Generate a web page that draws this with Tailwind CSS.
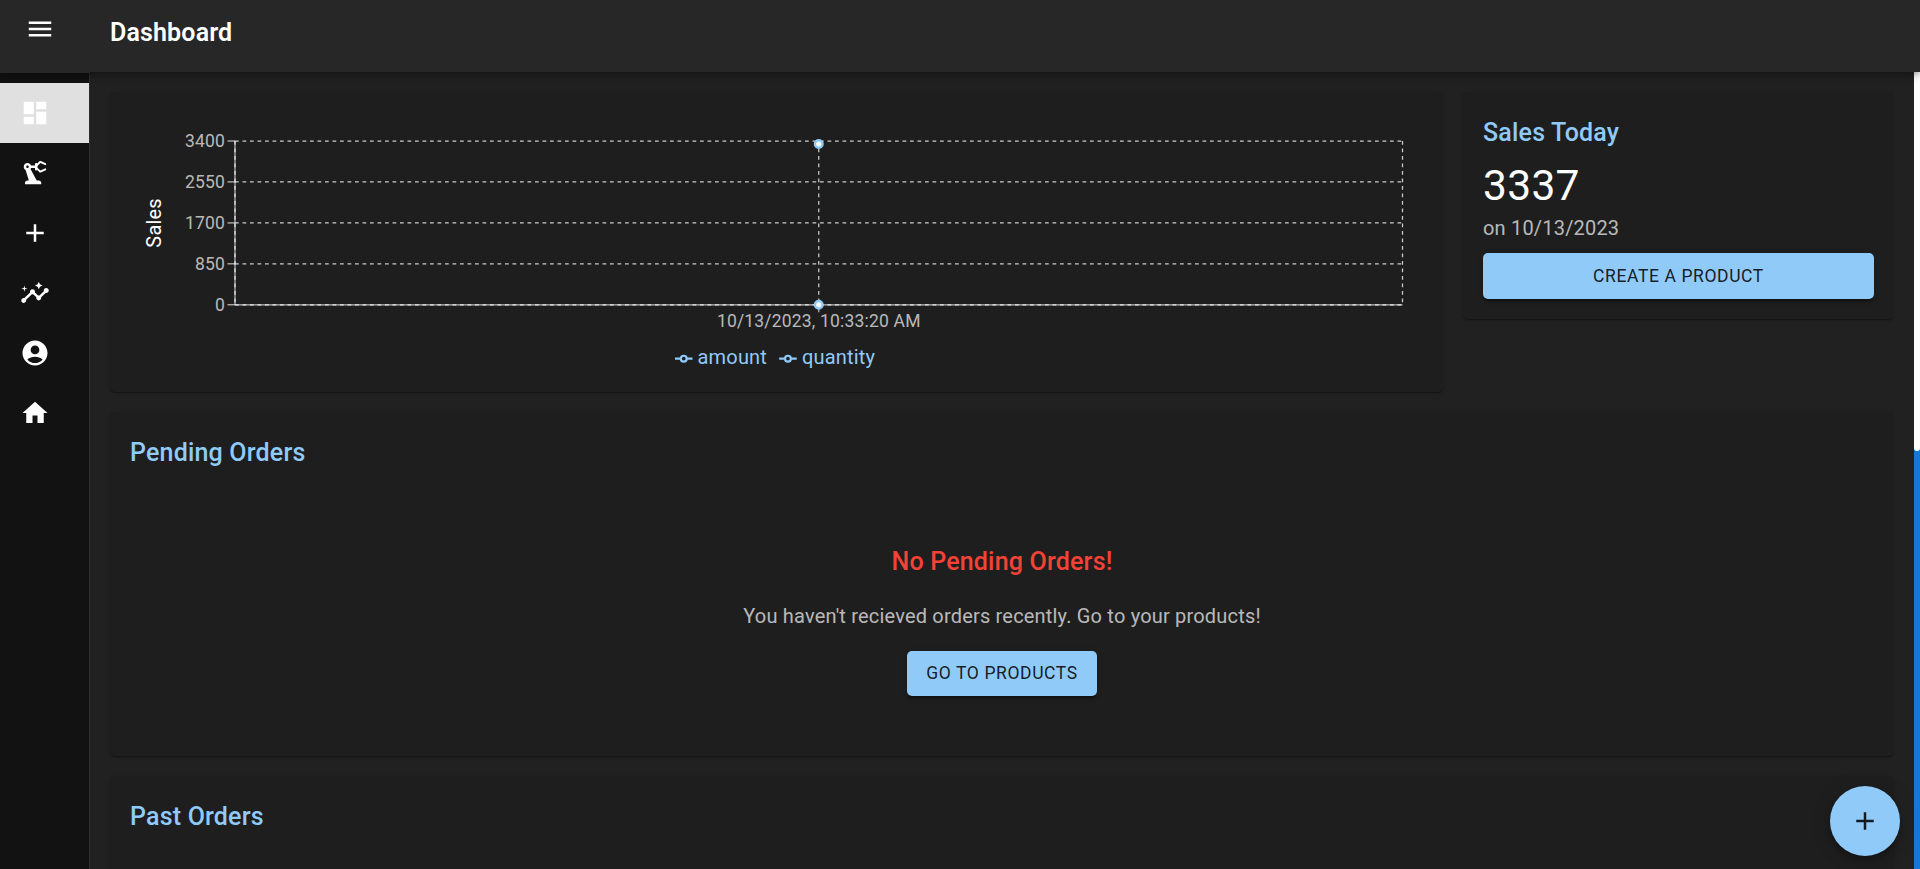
<!DOCTYPE html>
<html lang="en">
<head>
<meta charset="utf-8">
<title>Dashboard</title>
<script src="https://cdn.jsdelivr.net/npm/@tailwindcss/browser@4"></script>
</head>
<body class="h-screen overflow-hidden bg-[#212121] font-['Roboto',sans-serif] text-[20px] leading-[30px] tracking-[0.1876px] text-white">
<div class="flex h-full flex-col">
  <header class="relative z-10 flex h-[72px] shrink-0 items-center bg-[#272727] shadow-[0_2.5px_5px_-1px_rgba(0,0,0,0.2),0_5px_6px_rgba(0,0,0,0.14),0_1px_12px_rgba(0,0,0,0.12)]">
    <button class="mb-[14px] ml-[25px] size-[30px]" aria-label="Menu">
      <svg class="size-[30px]" viewBox="0 0 24 24" fill="currentColor"><path d="M3 18h18v-2H3v2zm0-5h18v-2H3v2zm0-7v2h18V6H3z"/></svg>
    </button>
    <h1 class="mb-[6px] ml-[55px] text-[25px] leading-[40px] font-semibold tracking-[0.15px]">Dashboard</h1>
  </header>

  <div class="flex min-h-0 flex-1">
    <nav class="flex w-[90px] shrink-0 flex-col border-r border-[#2e2e2e] bg-[#121212]">
      <div class="relative z-20 mb-[10px] h-px w-[90px] shrink-0 bg-[#272727]"></div>
      <a class="flex h-[60px] items-center bg-[#e0e0e0] pl-5"><svg class="size-[30px]" viewBox="0 0 24 24" fill="currentColor"><path d="M3 13h8V3H3v10zm0 8h8v-6H3v6zm10 0h8V11h-8v10zm0-18v6h8V3h-8z"/></svg></a>
      <a class="flex h-[60px] items-center pl-5"><svg class="size-[30px]" viewBox="0 0 24 24" fill="currentColor"><path d="m19.93 8.35-3.6 1.68L14 7.7V6.3l2.33-2.33 3.6 1.68c.38.18.82.01 1-.36.18-.38.01-.82-.36-1l-3.92-1.83c-.38-.18-.83-.1-1.13.2L13.78 4.3c-.18-.19-.45-.3-.78-.3-.55 0-1 .45-1 1v1H8.82C8.4 4.84 7.3 4 6 4 4.34 4 3 5.34 3 7c0 1.1.6 2.05 1.48 2.58L7.08 18H6c-1.1 0-2 .9-2 2v1h13v-1c0-1.1-.9-2-2-2h-1.62L8.41 8.77c.17-.24.31-.49.41-.77H12v1c0 .55.45 1 1 1 .32 0 .6-.16.78-.4l1.74 1.74c.3.3.75.38 1.13.2l3.92-1.83c.38-.18.54-.62.36-1-.18-.37-.62-.54-1-.36zM6 8c-.55 0-1-.45-1-1s.45-1 1-1 1 .45 1 1-.45 1-1 1z"/></svg></a>
      <a class="flex h-[60px] items-center pl-5"><svg class="size-[30px]" viewBox="0 0 24 24" fill="currentColor"><path d="M19 13h-6v6h-2v-6H5v-2h6V5h2v6h6v2z"/></svg></a>
      <a class="flex h-[60px] items-center pl-5"><svg class="size-[30px]" viewBox="0 0 24 24" fill="currentColor"><path d="M21 8c-1.45 0-2.26 1.44-1.93 2.51l-3.55 3.56c-.3-.09-.74-.09-1.04 0l-2.55-2.55C12.27 10.45 11.46 9 10 9c-1.45 0-2.27 1.44-1.93 2.52l-4.56 4.55C2.44 15.74 1 16.55 1 18c0 1.1.9 2 2 2 1.45 0 2.26-1.44 1.93-2.51l4.55-4.56c.3.09.74.09 1.04 0l2.55 2.55C12.73 16.55 13.54 18 15 18c1.45 0 2.27-1.44 1.93-2.52l3.56-3.55c1.07.33 2.51-.48 2.51-1.93 0-1.1-.9-2-2-2z"/><path d="m15 9 .94-2.07L18 6l-2.06-.93L15 3l-.92 2.07L12 6l2.08.93zM3.5 11 4 9l2-.5L4 8l-.5-2L3 8l-2 .5L3 9z"/></svg></a>
      <a class="flex h-[60px] items-center pl-5"><svg class="size-[30px]" viewBox="0 0 24 24" fill="currentColor"><path d="M12 2C6.48 2 2 6.48 2 12s4.48 10 10 10 10-4.48 10-10S17.52 2 12 2zm0 4c1.93 0 3.5 1.57 3.5 3.5S13.93 13 12 13s-3.5-1.57-3.5-3.5S10.07 6 12 6zm0 14c-2.03 0-4.43-.82-6.14-2.88C7.55 15.8 9.68 15 12 15s4.45.8 6.14 2.12C16.43 19.18 14.03 20 12 20z"/></svg></a>
      <a class="flex h-[60px] items-center pl-5"><svg class="size-[30px]" viewBox="0 0 24 24" fill="currentColor"><path d="M10 20v-6h4v6h5v-8h3L12 3 2 12h3v8z"/></svg></a>
    </nav>

    <main class="flex min-w-0 flex-1 flex-col gap-5 overflow-hidden p-5">
      <div class="flex shrink-0 items-start gap-5">
        <section class="h-[300px] w-[1333px] shrink-0 rounded-[5px] bg-[#1e1e1e] p-5 shadow-[0_2px_1px_-1px_rgba(0,0,0,0.2),0_1px_1px_rgba(0,0,0,0.14),0_1px_3px_rgba(0,0,0,0.12)]">
          <!-- Chart canvas: plot area 105..1272.5 by 29..192.75 -->
          <svg class="block h-[260px] w-[1293px]" viewBox="0 0 1293 260" fill="none">
            <g stroke="#ccc" stroke-width="1.25" stroke-dasharray="3.75 3.75">
              <path d="M105 192.75H1272.5"/><path d="M105 151.8H1272.5"/><path d="M105 110.9H1272.5"/><path d="M105 69.9H1272.5"/><path d="M105 29H1272.5"/>
              <path d="M688.75 29V192.75"/><path d="M105 29V192.75"/><path d="M1272.5 29V192.75"/>
            </g>
            <g stroke="#fff" stroke-opacity="0.7" stroke-width="1.25">
              <path d="M105 192.75H1272.5"/><path d="M688.75 192.75v7.5"/>
              <path d="M105 29V192.75"/>
              <path d="M97.5 192.75h7.5"/><path d="M97.5 151.8h7.5"/><path d="M97.5 110.9h7.5"/><path d="M97.5 69.9h7.5"/><path d="M97.5 29h7.5"/>
            </g>
            <g fill="#fff" fill-opacity="0.7" class="text-[17.5px]" text-anchor="end">
              <text x="95" y="35.2">3400</text><text x="95" y="76.2">2550</text><text x="95" y="117.1">1700</text><text x="95" y="158">850</text><text x="95" y="199">0</text>
              <text x="688.75" y="215" text-anchor="middle">10/13/2023, 10:33:20 AM</text>
            </g>
            <text transform="translate(31 110.9) rotate(-90)" text-anchor="middle" fill="#fff" class="text-[20px]">Sales</text>
            <g fill="#fff" stroke="#90caf9" stroke-width="2.5"><circle cx="688.75" cy="32" r="3.75"/><circle cx="688.75" cy="192.75" r="3.75"/></g>
            <g stroke="#90caf9" stroke-width="4">
              <path transform="translate(545 237.9) scale(0.547)" d="M0,16h10.667A5.333,5.333,0,1,1,21.333,16H32M21.333,16A5.333,5.333,0,1,1,10.667,16"/>
              <path transform="translate(649.2 237.9) scale(0.547)" d="M0,16h10.667A5.333,5.333,0,1,1,21.333,16H32M21.333,16A5.333,5.333,0,1,1,10.667,16"/>
            </g>
            <g fill="#90caf9" class="text-[20px]"><text x="567.5" y="252">amount</text><text x="672" y="252">quantity</text></g>
          </svg>
        </section>

        <section class="flex flex-1 flex-col rounded-[5px] bg-[#1e1e1e] p-5 shadow-[0_2px_1px_-1px_rgba(0,0,0,0.2),0_1px_1px_rgba(0,0,0,0.14),0_1px_3px_rgba(0,0,0,0.12)]">
          <h2 class="mt-px mb-[7px] text-[25px] leading-[40px] font-medium tracking-[0.0075em] text-[#90caf9]">Sales Today</h2>
          <p class="text-[42.5px] leading-[52.5px] tracking-[0.00735em]">3337</p>
          <p class="mt-[0.75px] text-white/70">on 10/13/2023</p>
          <button class="mt-[10px] h-[45.6px] rounded-[5px] bg-[#90caf9] text-[17.5px] font-normal tracking-[0.6px] text-black/87 shadow-[0_4px_1px_-2.5px_rgba(0,0,0,0.2),0_2.5px_2.5px_rgba(0,0,0,0.14),0_1.25px_6px_rgba(0,0,0,0.12)]">CREATE A PRODUCT</button>
        </section>
      </div>

      <section class="h-[344px] shrink-0 rounded-[5px] bg-[#1e1e1e] p-5 shadow-[0_2px_1px_-1px_rgba(0,0,0,0.2),0_1px_1px_rgba(0,0,0,0.14),0_1px_3px_rgba(0,0,0,0.12)]">
        <h2 class="mt-px text-[25px] leading-[40px] font-medium tracking-[0.0075em] text-[#90caf9]">Pending Orders</h2>
        <div class="mt-[69px] flex flex-col items-center">
          <h3 class="text-[25px] leading-[40px] font-medium tracking-[0.0075em] text-[#f44336]">No Pending Orders!</h3>
          <p class="mt-[19px] text-white/70">You haven't recieved orders recently. Go to your products!</p>
          <button class="mt-5 h-[45px] w-[190px] rounded-[5px] bg-[#90caf9] pb-0.5 text-[17.5px] font-normal tracking-[0.6px] text-black/87 shadow-[0_4px_1px_-2.5px_rgba(0,0,0,0.2),0_2.5px_2.5px_rgba(0,0,0,0.14),0_1.25px_6px_rgba(0,0,0,0.12)]">GO TO PRODUCTS</button>
        </div>
      </section>

      <section class="h-[344px] shrink-0 rounded-[5px] bg-[#1e1e1e] p-5 shadow-[0_2px_1px_-1px_rgba(0,0,0,0.2),0_1px_1px_rgba(0,0,0,0.14),0_1px_3px_rgba(0,0,0,0.12)]">
        <h2 class="mt-px text-[25px] leading-[40px] font-medium tracking-[0.0075em] text-[#90caf9]">Past Orders</h2>
      </section>
    </main>

    <div class="w-[6px] shrink-0 bg-[#1976d2]"><div class="h-[379px] rounded-b-[3px] bg-white"></div></div>
  </div>
</div>

<button class="fixed right-5 bottom-[13px] z-30 flex size-[70px] items-center justify-center rounded-full bg-[#90caf9] text-black/87 shadow-[0_4px_6px_-1px_rgba(0,0,0,0.2),0_7.5px_12.5px_rgba(0,0,0,0.14),0_1.25px_22px_rgba(0,0,0,0.12)]" aria-label="Add">
  <svg class="size-[30px]" viewBox="0 0 24 24" fill="currentColor"><path d="M19 13h-6v6h-2v-6H5v-2h6V5h2v6h6v2z"/></svg>
</button>
</body>
</html>
